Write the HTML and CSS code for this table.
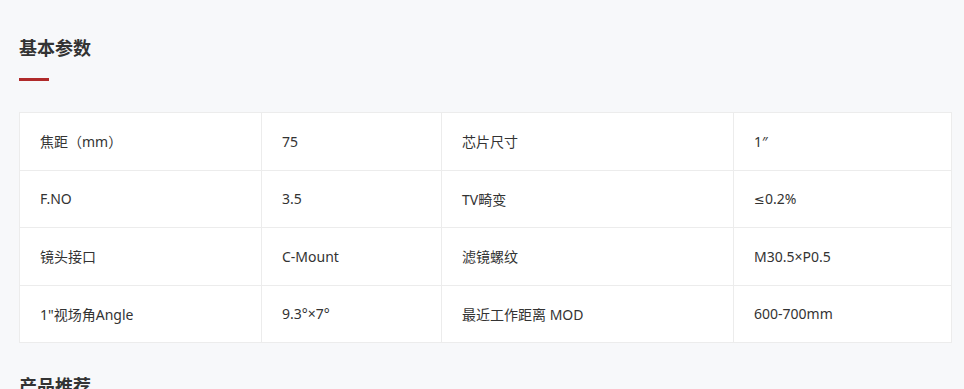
FILE: index.html
```html
<!DOCTYPE html>
<html lang="zh-CN">
<head>
<meta charset="utf-8">
<title>基本参数</title>
<link rel="stylesheet" href="styles.css">
</head>
<body>
<section class="params">
  <h2 class="sec-title">基本参数</h2>
  <div class="sec-bar"></div>
  <table class="spec">
    <colgroup>
      <col class="c1"><col class="c2"><col class="c3"><col class="c4">
    </colgroup>
    <tbody>
      <tr><td>焦距（mm）</td><td>75</td><td>芯片尺寸</td><td>1″</td></tr>
      <tr><td>F.NO</td><td>3.5</td><td>TV畸变</td><td><span class="sym">≤</span>0.2%</td></tr>
      <tr><td>镜头接口</td><td>C-Mount</td><td>滤镜螺纹</td><td>M30.5×P0.5</td></tr>
      <tr><td>1"视场角Angle</td><td>9.3°×7°</td><td>最近工作距离 MOD</td><td>600-700mm</td></tr>
    </tbody>
  </table>
  <h2 class="sec-title next">产品推荐</h2>
</section>
</body>
</html>
```
FILE: styles.css
```css
html, body {
  margin: 0;
  padding: 0;
  background: #f7f8fa;
}
body {
  font-family: "Noto Sans", "Noto Sans CJK SC", sans-serif;
  color: #333;
}
.params {
  padding: 35px 14px 0 19px;
}
.sec-title {
  margin: 0;
  font-size: 18px;
  line-height: 24px;
  font-weight: 700;
  color: #333;
  font-family: "Noto Sans CJK SC", sans-serif;
}
.sec-bar {
  width: 30px;
  height: 3px;
  background: #b02a2a;
  margin-top: 19px;
}
.spec {
  margin-top: 31px;
  width: 932px;
  border-collapse: collapse;
  table-layout: fixed;
  background: #fff;
}
.c1 { width: 242px; }
.c2 { width: 180px; }
.c3 { width: 292px; }
.c4 { width: 218px; }
.spec td {
  border: 1px solid #ececec;
  height: 56.5px;
  padding: 0 0 0 20px;
  font-size: 14px;
  color: #333;
  vertical-align: middle;
}
.sym {
  font-family: "DejaVu Sans", sans-serif;
  font-size: 13px;
}
.next {
  margin-top: 30px;
}
```
